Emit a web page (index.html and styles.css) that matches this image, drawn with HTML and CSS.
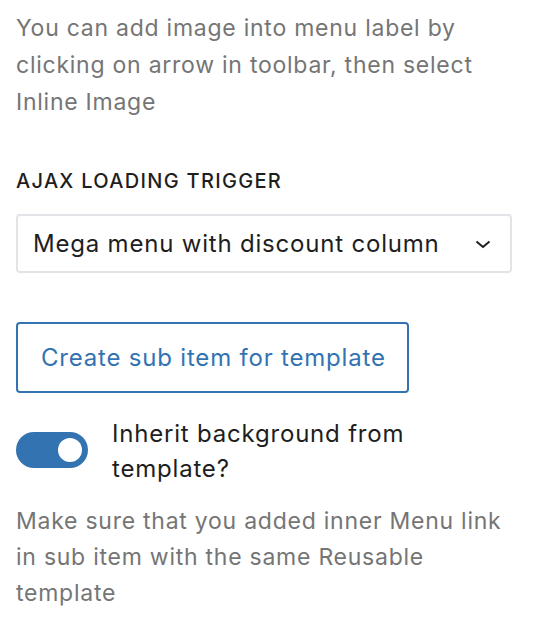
FILE: index.html
```html
<!DOCTYPE html>
<html lang="en">
<head>
<meta charset="utf-8">
<title>Menu item settings</title>
<link rel="stylesheet" href="styles.css">
</head>
<body>
<div class="panel">
  <p class="help help-top">You can add image into menu label by clicking on arrow in toolbar, then select Inline Image</p>

  <div class="field">
    <label class="field-label" for="ajax-trigger">AJAX LOADING TRIGGER</label>
    <div class="select">
      <span class="select-value" id="ajax-trigger">Mega menu with discount column</span>
      <svg class="chevron" width="24" height="24" viewBox="0 0 24 24" aria-hidden="true">
        <path d="M5.5 9.5 L12 15 L18.5 9.5" fill="none" stroke="#1e1e1e" stroke-width="2"/>
      </svg>
    </div>
  </div>

  <button class="btn-secondary" type="button">Create sub item for template</button>

  <div class="toggle-row">
    <span class="toggle is-on"><span class="toggle-thumb"></span></span>
    <span class="toggle-label">Inherit background from template?</span>
  </div>

  <p class="help help-bottom">Make sure that you added inner Menu link in sub item with the same Reusable template</p>
</div>
</body>
</html>
```

FILE: styles.css
```css
html, body {
  margin: 0;
  padding: 0;
  background: #ffffff;
}

body {
  font-family: Inter, "Noto Sans", "Liberation Sans", sans-serif;
  color: #1e1e1e;
}

.panel {
  width: 496px;
  padding: 10px 16px 0 16px;
  display: flex;
  flex-direction: column;
  align-items: flex-start;
}

.help {
  margin: 0;
  color: #757575;
  font-size: 23px;
  letter-spacing: 0.75px;
}

.help-top {
  width: 480px;
  line-height: 37px;
}

.field {
  margin-top: 48px;
  width: 496px;
  display: flex;
  flex-direction: column;
}

.field-label {
  font-size: 20px;
  line-height: 24px;
  font-weight: 500;
  letter-spacing: 1.3px;
  color: #1e1e1e;
}

.select {
  margin-top: 21px;
  height: 55px;
  border: 2px solid #e2e4e7;
  border-radius: 4px;
  display: flex;
  align-items: center;
  justify-content: space-between;
  padding: 0 15px 0 15px;
}

.select-value {
  font-size: 24px;
  letter-spacing: 0.8px;
  color: #1e1e1e;
}

.chevron {
  display: block;
}

.btn-secondary {
  margin-top: 49px;
  width: 393px;
  height: 71px;
  border: 2px solid #3373b2;
  border-radius: 4px;
  background: #ffffff;
  color: #3373b2;
  font-family: inherit;
  font-size: 24px;
  letter-spacing: 0.8px;
  padding: 0 20px 0 23px;
  text-align: left;
  white-space: nowrap;
}

.toggle-row {
  margin-top: 23px;
  display: flex;
  align-items: flex-start;
  gap: 24px;
}

.toggle {
  margin-top: 16px;
  flex: none;
  width: 72px;
  height: 36px;
  border-radius: 18px;
  background: #3373b2;
  position: relative;
}

.toggle-thumb {
  position: absolute;
  top: 6px;
  left: 42px;
  width: 24px;
  height: 24px;
  border-radius: 50%;
  background: #ffffff;
}

.toggle-label {
  width: 300px;
  font-size: 24px;
  line-height: 35px;
  letter-spacing: 0.8px;
  color: #1e1e1e;
}

.help-bottom {
  margin-top: 17px;
  line-height: 36px;
  width: 490px;
}
```
